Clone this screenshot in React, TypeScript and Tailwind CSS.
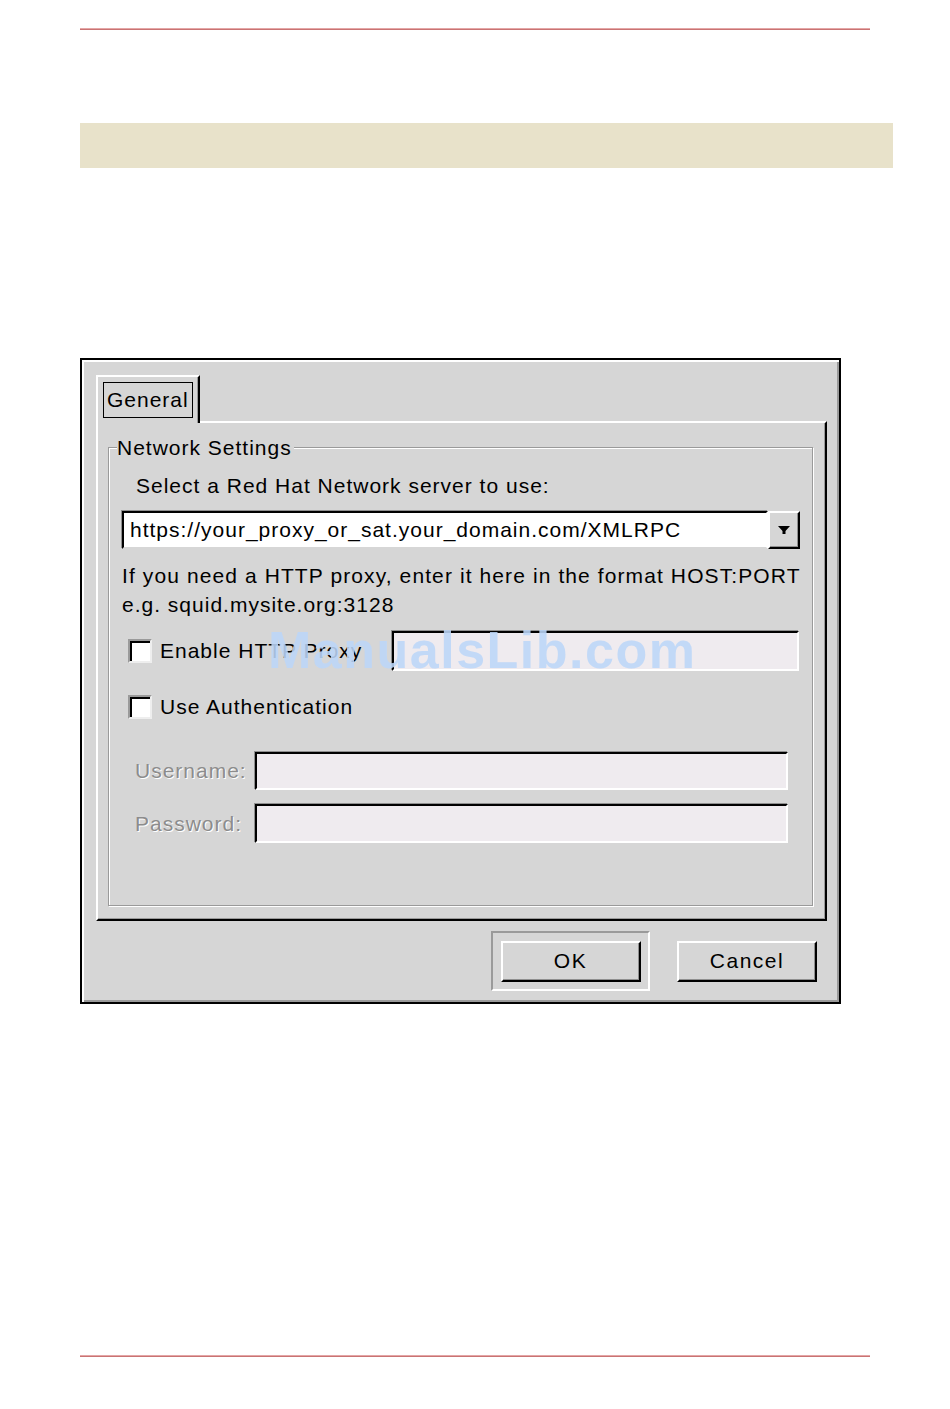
import React from "react";

const font = "font-['Liberation_Sans',Arial,sans-serif]";

const Checkbox = () => (
  <div className="w-[24px] h-[24px] border-2 border-t-[#9a9a9a] border-l-[#9a9a9a] border-r-[#eeeeee] border-b-[#eeeeee]">
    <div className="w-full h-full border-t-2 border-l-2 border-black bg-white"></div>
  </div>
);

const Entry = ({ className }: { className: string }) => (
  <div
    className={`border-2 border-t-black border-l-black border-r-white border-b-white shadow-[-1px_-1px_0_#8f8f8f] bg-[#efebef] ${className}`}
  ></div>
);

const Button = ({ label, className }: { label: string; className?: string }) => (
  <div
    className={`w-[140px] h-[41px] flex items-center justify-center border-2 border-t-white border-l-white border-r-black border-b-black shadow-[inset_-1px_-1px_0_#8f8f8f] text-[21px] tracking-[1.5px] text-black ${className ?? ""}`}
  >
    {label}
  </div>
);

export default function App() {
  return (
    <div className={`relative w-[950px] h-[1409px] bg-white overflow-hidden ${font}`}>
      {/* header rule and banner */}
      <div className="pt-[28px] pl-[80px]">
        <div className="w-[790px] h-[2px] bg-[#c97373] border-t border-[#e4a6a6]"></div>
        <div className="mt-[93px] w-[813px] h-[45px] bg-[#e8e2ca]"></div>
      </div>

      {/* dialog */}
      <div className="ml-[80px] mt-[190px] w-[761px] h-[646px] border-2 border-black bg-[#d6d6d6] shadow-[inset_2px_2px_0_#fff,inset_-2px_-2px_0_#9a9a9a] pl-[14px] pt-[15px] flex flex-col">
        {/* tab */}
        <div className="relative z-10 -mb-[2px] w-[104px] h-[48px] bg-[#d6d6d6] border-l-2 border-t-2 border-white border-r-2 border-r-black shadow-[inset_-1px_0_0_#9a9a9a] pl-[5px] pt-[5px]">
          <div className="w-[90px] h-[36px] border border-black flex items-center pl-[3px] text-[21px] tracking-[1px] text-black">
            General
          </div>
        </div>

        {/* tab panel */}
        <div className="w-[731px] h-[500px] border-2 border-t-white border-l-white border-r-black border-b-black shadow-[inset_-1px_-1px_0_#9a9a9a] pl-[10px] pt-[24px]">
          <div className="relative w-[705px] h-[459px] border border-[#9a9a9a] shadow-[1px_1px_0_#fff,inset_1px_1px_0_#fff] px-[13px] text-[21px] tracking-[1px] text-black whitespace-nowrap">
            <div className="absolute -top-[15px] left-[8px] bg-[#d6d6d6] pr-[2px] leading-[29px]">
              Network Settings
            </div>

            <div className="mt-[23px] ml-[14px] h-[29px] leading-[29px]">
              Select a Red Hat Network server to use:
            </div>

            {/* combo */}
            <div className="mt-[11px] flex h-[38px] w-[678px]">
              <div className="flex-1 bg-white border-2 border-t-black border-l-black border-r-white border-b-[#d6d6d6] shadow-[-1px_-1px_0_#8f8f8f] flex items-center pl-[6px]">
                https://your_proxy_or_sat.your_domain.com/XMLRPC
              </div>
              <div className="w-[32px] border-2 border-t-white border-l-white border-r-black border-b-black shadow-[inset_-1px_-1px_0_#8f8f8f] flex items-center justify-center">
                <svg width="12" height="8" viewBox="0 0 12 8">
                  <polygon points="0,0 12,0 7.5,5 7.5,8 4.5,8 4.5,5" fill="#000" />
                </svg>
              </div>
            </div>

            <div className="mt-[12px] leading-[29px]">
              <div className="tracking-[1.1px]">If you need a HTTP proxy, enter it here in the format HOST:PORT</div>
              <div>e.g. squid.mysite.org:3128</div>
            </div>

            {/* proxy row */}
            <div className="mt-[12px] flex items-center h-[40px]">
              <div className="ml-[6px]">
                <Checkbox />
              </div>
              <span className="ml-[8px] w-[232px]">Enable HTTP Proxy</span>
              <Entry className="w-[408px] h-[40px]" />
            </div>

            {/* auth row */}
            <div className="mt-[24px] flex items-center h-[24px]">
              <div className="ml-[6px]">
                <Checkbox />
              </div>
              <span className="ml-[8px]">Use Authentication</span>
            </div>

            <div className="mt-[33px] flex items-center h-[38px]">
              <span className="ml-[13px] w-[120px] text-[#8c8c8c] [text-shadow:1px_1px_0_#fff]">Username:</span>
              <Entry className="w-[533px] h-[38px]" />
            </div>
            <div className="mt-[14px] flex items-center h-[39px]">
              <span className="ml-[13px] w-[120px] text-[#8c8c8c] [text-shadow:1px_1px_0_#fff]">Password:</span>
              <Entry className="w-[533px] h-[39px]" />
            </div>
          </div>
        </div>

        {/* buttons */}
        <div className="mt-[10px] flex justify-end items-center pr-[22px] gap-[27px]">
          <div className="w-[159px] h-[60px] border-2 border-t-[#9a9a9a] border-l-[#9a9a9a] border-r-white border-b-white flex items-center justify-center">
            <Button label="OK" />
          </div>
          <Button label="Cancel" className="w-[139px]" />
        </div>
      </div>

      {/* footer rule */}
      <div className="ml-[80px] mt-[351px] w-[790px] h-[2px] bg-[#c97373] border-t border-[#e4a6a6]"></div>

      {/* watermark */}
      <div className="absolute left-[268px] top-[624px] text-[52px] leading-none font-bold tracking-[1.5px] text-[rgba(188,214,248,0.88)]">
        ManualsLib.com
      </div>
    </div>
  );
}
